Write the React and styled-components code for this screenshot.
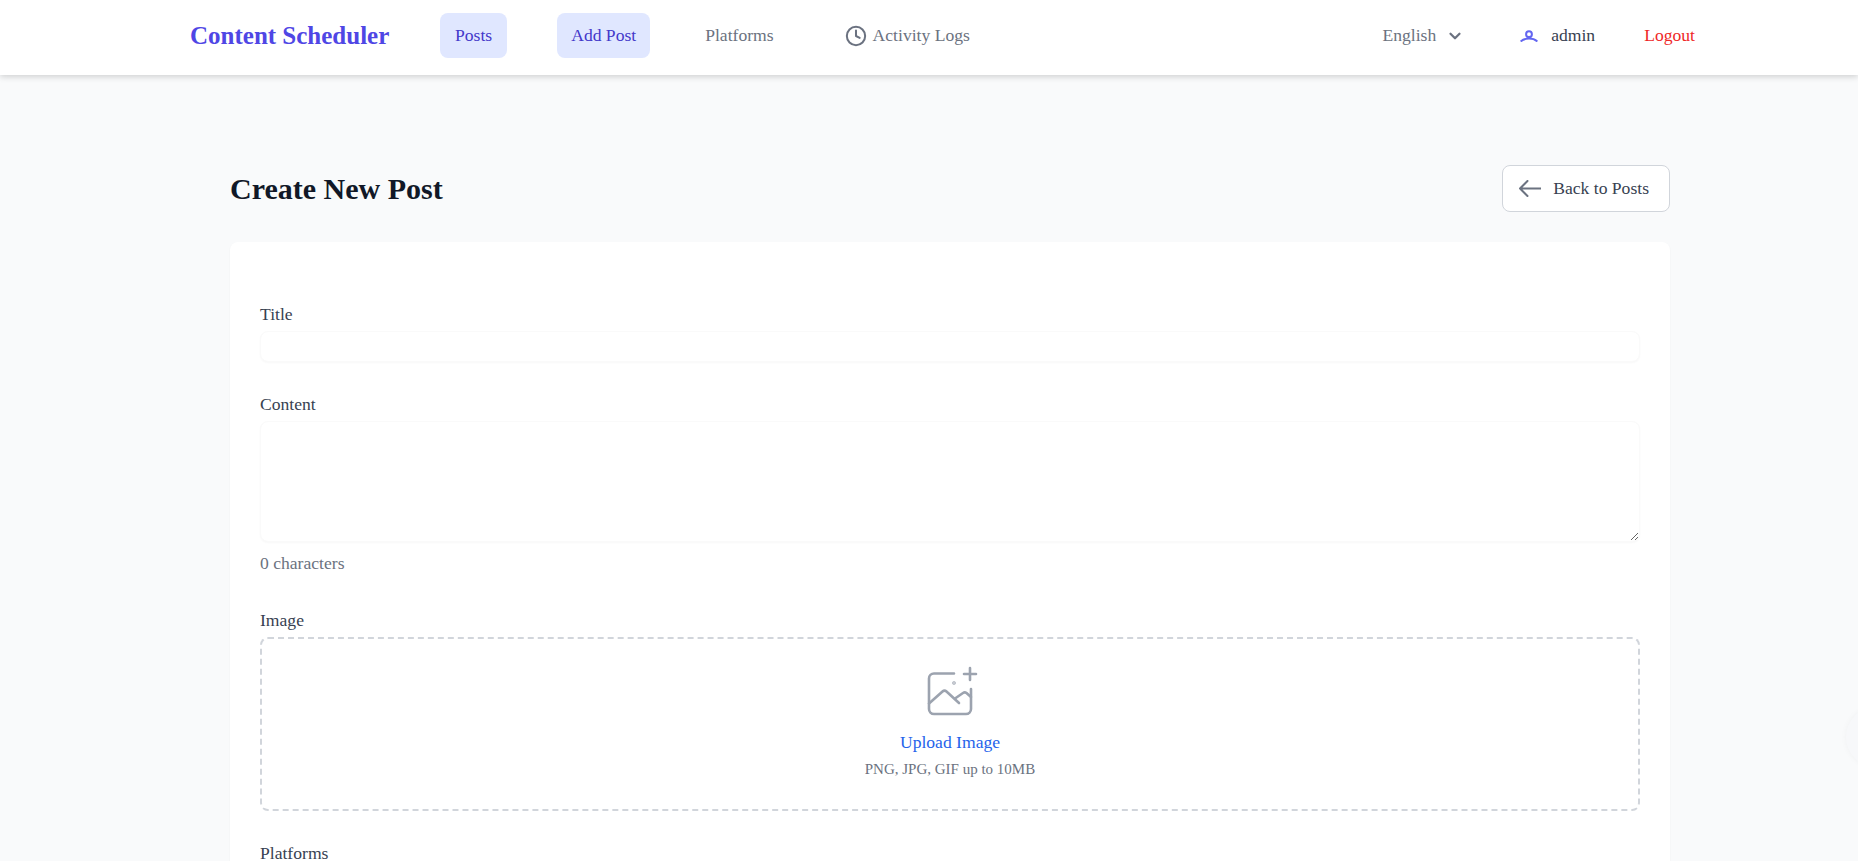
import styled, { createGlobalStyle } from 'styled-components';
import { ChevronDown, Clock } from 'lucide-react';

const GlobalStyle = createGlobalStyle`
  html, body {
    margin: 0;
    height: 100%;
    overflow: hidden;
    background: #f9fafb;
    font-family: "Liberation Serif", "Times New Roman", serif;
  }
`;

function UserIcon() {
  return (
    <UserSvg viewBox="0 0 18 12" fill="none" stroke="#6366f1" strokeWidth="2">
      <circle cx="9" cy="4.2" r="2.9" />
      <path d="M0.6 11.5C3 9.4 5.5 8.6 9 8.6s6 .8 8.4 2.9" />
    </UserSvg>
  );
}

function BackArrow() {
  return (
    <ArrowSvg viewBox="0 0 22 17" fill="none" stroke="#6b7280" strokeWidth="2" strokeLinecap="round" strokeLinejoin="round">
      <path d="M8.5 1L1 8.5L8.5 16M1 8.5H21.5" />
    </ArrowSvg>
  );
}

function ImageAddIcon() {
  return (
    <UploadSvg viewBox="0 0 56 56" fill="none" stroke="#9ca3af" strokeWidth="2.6" strokeLinecap="round" strokeLinejoin="round">
      <path d="M29 8.5H9a5 5 0 0 0-5 5V44a5 5 0 0 0 5 5h32a5 5 0 0 0 5-5V24" />
      <path d="M45 3v12M39 9h12" />
      <path d="M4 38.5l13.5-12a3 3 0 0 1 4 0L34 38" />
      <path d="M30 33.5l8-5.5a3 3 0 0 1 3.5 0l4.5 4" />
      <circle cx="29" cy="18" r="0.5" />
    </UploadSvg>
  );
}

export default function App() {
  return (
    <Page>
      <GlobalStyle />
      <Nav>
        <Logo>Content Scheduler</Logo>
        <NavLinks>
          <NavLink $active $pad={15}>Posts</NavLink>
          <NavLink $active $pad={14}>Add Post</NavLink>
          <NavLink $pad={5}>Platforms</NavLink>
          <NavLink $pad={16}>
            <Clock size={22} strokeWidth={2.2} />
            Activity Logs
          </NavLink>
        </NavLinks>
        <NavRight>
          <LangSelect>
            English
            <ChevronDown size={18} strokeWidth={3} />
          </LangSelect>
          <UserBox>
            <UserIcon />
            admin
          </UserBox>
          <Logout>Logout</Logout>
        </NavRight>
      </Nav>
      <Main>
        <Header>
          <PageTitle>Create New Post</PageTitle>
          <BackButton>
            <BackArrow />
            Back to Posts
          </BackButton>
        </Header>
        <Card>
          <Field>
            <Label>Title</Label>
            <TextInput />
          </Field>
          <Field>
            <Label>Content</Label>
            <TextArea />
            <Hint>0 characters</Hint>
          </Field>
          <Field>
            <Label>Image</Label>
            <DropZone>
              <ImageAddIcon />
              <UploadLink>Upload Image</UploadLink>
              <UploadHint>PNG, JPG, GIF up to 10MB</UploadHint>
            </DropZone>
          </Field>
          <Field>
            <Label>Platforms</Label>
          </Field>
        </Card>
      </Main>
      <FloatingButton />
    </Page>
  );
}

const Page = styled.div`
  position: relative;
  height: 100vh;
  overflow: hidden;
  background: #f9fafb;
`;

const Nav = styled.nav`
  height: 75px;
  box-sizing: border-box;
  display: flex;
  align-items: center;
  padding: 0 163px 4px 190px;
  background: #fff;
  box-shadow: 0 2px 6px rgba(0, 0, 0, 0.16);
`;

const Logo = styled.div`
  width: 250px;
  font-size: 25px;
  font-weight: 700;
  color: #4f46e5;
`;

const NavLinks = styled.div`
  display: flex;
  gap: 50px;
`;

const NavLink = styled.a`
  height: 45px;
  display: flex;
  align-items: center;
  gap: 6px;
  padding: 0 ${(p) => p.$pad}px;
  border-radius: 8px;
  font-size: 17.6px;
  color: ${(p) => (p.$active ? '#4338ca' : '#6b7280')};
  background: ${(p) => (p.$active ? '#e0e7ff' : 'transparent')};
`;

const NavRight = styled.div`
  margin-left: auto;
  display: flex;
  align-items: center;
  gap: 49px;
  font-size: 17.6px;
`;

const LangSelect = styled.div`
  display: flex;
  align-items: center;
  gap: 10px;
  padding-right: 7px;
  color: #6b7280;
`;

const UserBox = styled.div`
  display: flex;
  align-items: center;
  gap: 13px;
  color: #374151;
`;

const UserSvg = styled.svg`
  width: 18px;
  height: 12px;
`;

const Logout = styled.div`
  color: #ef2727;
`;

const Main = styled.main`
  width: 1440px;
  margin-left: 230px;
  padding-top: 90px;
`;

const Header = styled.div`
  display: flex;
  align-items: center;
  justify-content: space-between;
  margin-bottom: 30px;
`;

const PageTitle = styled.h1`
  margin: 0;
  font-size: 30px;
  font-weight: 700;
  color: #111827;
`;

const BackButton = styled.button`
  height: 47px;
  display: flex;
  align-items: center;
  gap: 12px;
  padding: 0 20px 0 16px;
  background: #fff;
  border: 1px solid #d1d5db;
  border-radius: 8px;
  font-family: inherit;
  font-size: 17.6px;
  color: #374151;
`;

const ArrowSvg = styled.svg`
  width: 22px;
  height: 17px;
`;

const Card = styled.div`
  min-height: 700px;
  box-sizing: border-box;
  padding: 62px 30px 0;
  background: #fff;
  border-radius: 8px;
  box-shadow: 0 1px 2px rgba(0, 0, 0, 0.05);
`;

const Field = styled.div`
  margin-bottom: 32px;
`;

const Label = styled.label`
  display: block;
  margin-bottom: 7px;
  font-size: 17.6px;
  line-height: 20px;
  color: #374151;
`;

const TextInput = styled.input`
  display: block;
  width: 100%;
  height: 31px;
  box-sizing: border-box;
  border: 1px solid #fafafa;
  border-radius: 8px;
  outline: none;
  box-shadow: 0 1px 2px rgba(0, 0, 0, 0.03);
`;

const TextArea = styled.textarea`
  display: block;
  width: 100%;
  height: 121px;
  box-sizing: border-box;
  border: 1px solid #fafafa;
  border-radius: 8px;
  outline: none;
  box-shadow: 0 1px 2px rgba(0, 0, 0, 0.03);
`;

const Hint = styled.div`
  margin-top: 11px;
  margin-bottom: 37px;
  font-size: 17.6px;
  line-height: 20px;
  color: #6b7280;
`;

const DropZone = styled.div`
  height: 174px;
  box-sizing: border-box;
  display: flex;
  flex-direction: column;
  align-items: center;
  padding-top: 26px;
  border: 2px dashed #d1d5db;
  border-radius: 8px;
`;

const UploadSvg = styled.svg`
  width: 56px;
  height: 56px;
  margin-left: 6px;
`;

const UploadLink = styled.div`
  margin-top: 11px;
  font-size: 17.6px;
  line-height: 20px;
  color: #2563eb;
`;

const UploadHint = styled.div`
  margin-top: 9px;
  font-size: 15px;
  line-height: 17px;
  color: #6b7280;
`;

const FloatingButton = styled.div`
  position: absolute;
  left: 1846px;
  top: 707px;
  width: 60px;
  height: 60px;
  border-radius: 50%;
  background: #f7f8fa;
  box-shadow: 0 0 6px rgba(0, 0, 0, 0.04);
`;
